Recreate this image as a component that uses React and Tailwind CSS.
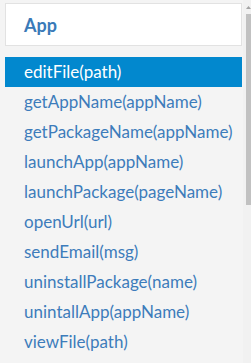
import React from "react";

const items = [
  "editFile(path)",
  "getAppName(appName)",
  "getPackageName(appName)",
  "launchApp(appName)",
  "launchPackage(pageName)",
  "openUrl(url)",
  "sendEmail(msg)",
  "uninstallPackage(name)",
  "unintallApp(appName)",
  "viewFile(path)",
];

export default function App() {
  const selected = 0;

  return (
    <div
      className="w-[251px] h-[363px] bg-[#f4f4f4] flex overflow-hidden"
      style={{ fontFamily: "Lato, 'Source Sans Pro', sans-serif" }}
    >
      {/* Panel */}
      <div className="w-[243px] pl-[5px] pr-px pt-[3px]">
        <div className="h-[43px] bg-white border border-[#e2e2e2] flex items-center pl-[18px]">
          <span className="text-[18px] font-bold text-[#3a7ab8] leading-none">App</span>
        </div>

        <ul className="mt-[11px]">
          {items.map((name, i) => (
            <li
              key={name}
              className={
                i === selected
                  ? "h-[30px] flex items-center pl-[19px] bg-[#0288ce] text-white text-[17px]"
                  : "h-[30px] flex items-center pl-[19px] text-[#3d7cbb] text-[17px]"
              }
            >
              {name}
            </li>
          ))}
        </ul>
      </div>

      {/* Scrollbar */}
      <div className="w-[8px] bg-[#f1f1f1] flex flex-col items-end">
        <div className="h-[14px] w-[5px] flex items-center justify-center">
          <svg width="5" height="3" viewBox="0 0 5 3">
            <path d="M0 3 L2.5 0 L5 3 Z" fill="#a3a3a3" />
          </svg>
        </div>
        <div className="w-[5px] h-[191px] bg-[#c1c1c1]" />
      </div>
    </div>
  );
}
